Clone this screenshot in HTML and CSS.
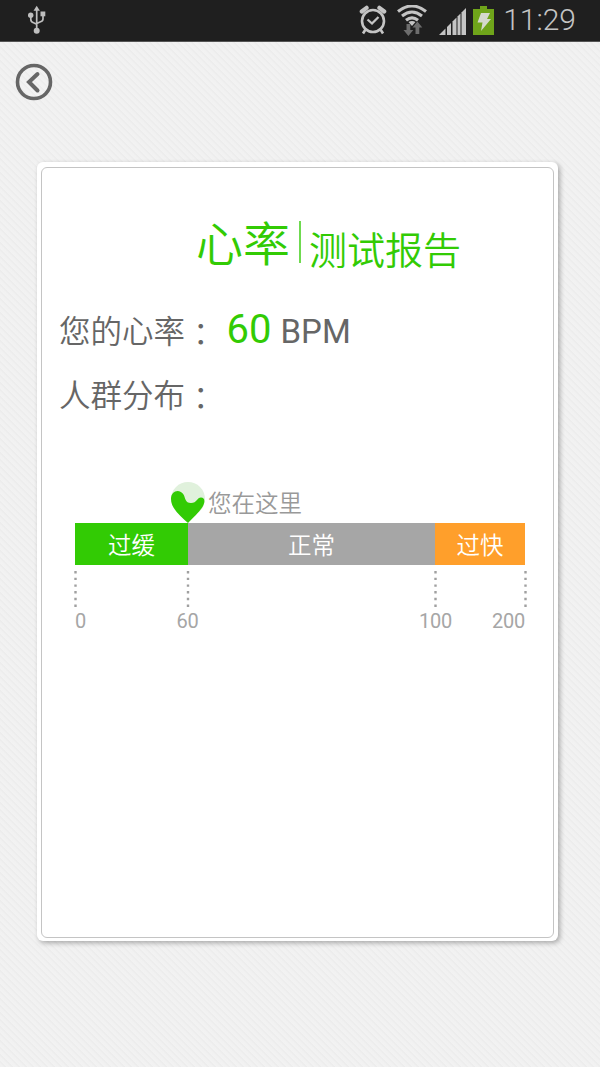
FILE: index.html
```
<!DOCTYPE html>
<html lang="zh-CN">
<head>
  <meta charset="utf-8">
  <title>心率测试报告</title>
  <link rel="stylesheet" href="styles.css">
</head>
<body>
  <div class="status-bar">
    <svg class="usb" width="20" height="30" viewBox="0 0 20 30">
      <g fill="none" stroke="#bebebe" stroke-width="1.7">
        <path d="M9.7 4v22M3.8 11v3.5q0 2.5 2.8 3.2l3.1 1.5M16 9v5q0 2-2.5 2.7L9.7 18.500"/>
      </g>
      <g fill="#bebebe">
        <path d="M9.700 .8l3.200 5H6.500z"/>
        <circle cx="3.700" cy="10.200" r="2.700"/>
        <path d="M13.500 6.500h4.800v4.800h-4.800z"/>
        <circle cx="9.700" cy="25.800" r="3"/>
      </g>
    </svg>

    <div class="status-icons">
      <svg width="28" height="30" viewBox="0 0 28 30">
        <g fill="none" stroke="#c4c4c4" stroke-width="2.600">
          <circle cx="14" cy="16" r="11"/>
          <path d="M8.500 14.500l4.500 4 6.500-6.500" stroke-width="2.300"/>
          <path d="M2.800 6.500l4.800-3.700M25.200 6.500l-4.800-3.700" stroke-width="4.200" stroke-linecap="round"/>
          <path d="M6.500 24.500L4 28.500M21.500 24.500l2.500 4"/>
        </g>
      </svg>
      <svg width="30" height="32" viewBox="0 0 30 32">
        <g fill="none" stroke="#c4c4c4" stroke-width="3.100">
          <path d="M1 6.500q14-11 28 0"/>
          <path d="M5 11q10-8 20 0"/>
          <path d="M9 15.300q6-5 12 0"/>
        </g>
        <path d="M11.500 17q3.500-2 7 0L15 21z" fill="#c4c4c4"/>
        <path d="M9.500 19h3.800v6h3L11.400 31l-4.900-6h3z" fill="#6d6d6d"/>
        <path d="M20.400 16.500l4.900 6h-3v6.500h-3.800v-6.500h-3z" fill="#6d6d6d"/>
      </svg>
      <svg class="signal" width="27" height="27" viewBox="0 0 27 27" fill="#c4c4c4">
        <path d="M0 27l6.500-6.500V27z"/>
        <path d="M8 19l4-4V27H8z"/>
        <path d="M13.500 13.500l4-4V27h-4z"/>
        <path d="M18.500 8.500l3-3V27h-3z"/>
        <path d="M22.500 4.500L27 0v27h-4.500z"/>
      </svg>
      <svg width="21" height="29" viewBox="0 0 21 29">
        <path d="M0 3h7V0h7v3h7v26H0z" fill="#6fa41a"/>
        <path d="M8 7h9l-3 6h4L8 25l1.500-8.500H4.500z" fill="#d5d9cd"/>
      </svg>
      <span class="clock">11:29</span>
    </div>
  </div>

  <div class="nav">
    <svg width="38" height="38" viewBox="0 0 38 38" fill="none" stroke="#666">
      <circle cx="19" cy="19" r="16.500" stroke-width="3.600"/>
      <path d="M22.500 11L14 19l8.500 8.500" stroke-width="4" stroke-linecap="round" stroke-linejoin="miter"/>
    </svg>
  </div>

  <div class="card">
    <div class="card-inner">
      <h1 class="title">
        <span class="title-main">心率</span>
        <span class="divider"></span>
        <span class="title-sub">测试报告</span>
      </h1>

      <p class="row">您的心率<span class="colon">：</span><span class="value">60</span><span class="unit">BPM</span></p>
      <p class="row">人群分布<span class="colon">：</span></p>

      <div class="chart">
        <div class="marker">
          <svg width="34" height="41" viewBox="0 0 34 41">
            <circle cx="17" cy="17" r="17" fill="#e0f1dc"/>
            <path d="M0 17C0 8 9 6.500 12.500 12.500C14.500 16 14 21 20 21C26 21 26 15.500 30 15.500C33 15.500 34 18 33 21.500C31.500 27 24 34 17 41C9 34 0 26 0 17z" fill="#32cb04"/>
          </svg>
          <span>您在这里</span>
        </div>
        <div class="bar">
          <div class="slow">过缓</div>
          <div class="normal">正常</div>
          <div class="fast">过快</div>
        </div>
        <svg class="ticks" width="454" height="37" viewBox="-2 0 454 37">
          <path d="M.500 0v37M113 0v37M360.500 0v37M450.500 0v37" stroke="#a0a0a0" stroke-width="2.400" stroke-dasharray="2.400 4.300"/>
        </svg>
        <div class="scale">
          <span>0</span>
          <span>60</span>
          <span>100</span>
          <span>200</span>
        </div>
      </div>
    </div>
  </div>
</body>
</html>
```
FILE: styles.css
```
* {
  box-sizing: border-box;
}

body {
  margin: 0;
  height: 1067px;
  overflow: hidden;
  font-family: Roboto, "Noto Sans CJK SC", sans-serif;
  background: repeating-linear-gradient(45deg, #f2f2f2 0, #f1f1f1 2.5px, #ebebeb 4px, #f2f2f2 4.95px);
}

svg {
  display: block;
  flex: none;
}

.status-bar {
  display: flex;
  justify-content: space-between;
  height: 42px;
  padding: 5px 24px 0 27px;
  background: #1f1f1f;
  border-bottom: 1px solid #555;
}

.status-icons {
  display: flex;
  align-items: flex-start;
}

.status-icons svg {
  margin-right: 10px;
}

.status-icons svg:nth-child(2) {
  margin-right: 13px;
}

.status-icons svg:nth-child(4) {
  margin: 1px 9px 0 -4px;
}

.status-icons .signal {
  margin: 3px 11px 0 -1px;
}

.clock {
  font-size: 30px;
  font-weight: 350;
  line-height: 30px;
  color: #c4c4c4;
}

.nav {
  height: 120px;
  padding: 21px 15px;
}

.card {
  width: 521px;
  height: 779px;
  margin-left: 37px;
  padding: 5px 4px 4px;
  background: #fff;
  border-radius: 6px;
  box-shadow: 2px 2px 5px rgba(0, 0, 0, 0.3);
}

.card-inner {
  height: 771px;
  border: 1px solid #c4c4c4;
  border-radius: 6px;
  padding: 45px 17px 0;
}

.title {
  display: flex;
  height: 68px;
  margin: 0 0 0 137px;
  font-weight: 350;
  color: #32cb04;
}

.title-main {
  font-size: 47px;
  line-height: 64px;
}

.divider {
  width: 2px;
  height: 42px;
  margin: 8px 8px 0 9px;
  background: #6fda50;
}

.title-sub {
  font-size: 38px;
  line-height: 77px;
}

.row {
  display: flex;
  align-items: baseline;
  height: 64px;
  margin: 0;
  font-size: 31.5px;
  font-weight: 350;
  line-height: 96px;
  color: #666;
}

.colon {
  font-family: "Noto Sans CJK JP", sans-serif;
  transform: translateY(3px);
}

.value {
  margin-left: 10px;
  font-size: 40px;
  font-weight: 400;
  color: #32cb04;
}

.unit {
  margin-left: 9px;
  font-size: 33px;
  font-weight: 400;
}

.chart {
  width: 452px;
  margin: 73px 0 0 16px;
}

.marker {
  display: flex;
  height: 41px;
  padding-left: 96px;
  font-size: 23.5px;
  font-weight: 350;
  line-height: 44px;
  color: #999;
}

.marker span {
  margin-left: 3px;
}

.bar {
  display: flex;
  width: 450px;
  height: 42px;
  font-size: 23.5px;
  font-weight: 350;
  line-height: 46px;
  text-align: center;
  color: #fff;
}

.slow {
  width: 113px;
  background: #32cb04;
}

.normal {
  width: 247px;
  background: #a6a6a6;
}

.fast {
  width: 90px;
  background: #ff9f2b;
}

.ticks {
  margin: 6px 0 0 -2px;
}

.scale {
  display: grid;
  grid-template-columns: 56px 113px 236px 45px;
  width: 450px;
  font-size: 20px;
  line-height: 26px;
  letter-spacing: -0.2px;
  color: #a6a6a6;
}

.scale span:nth-child(2) {
  text-align: center;
}

.scale span:nth-child(3) {
  padding-right: 28px;
  text-align: right;
}

.scale span:nth-child(4) {
  text-align: right;
}
```
